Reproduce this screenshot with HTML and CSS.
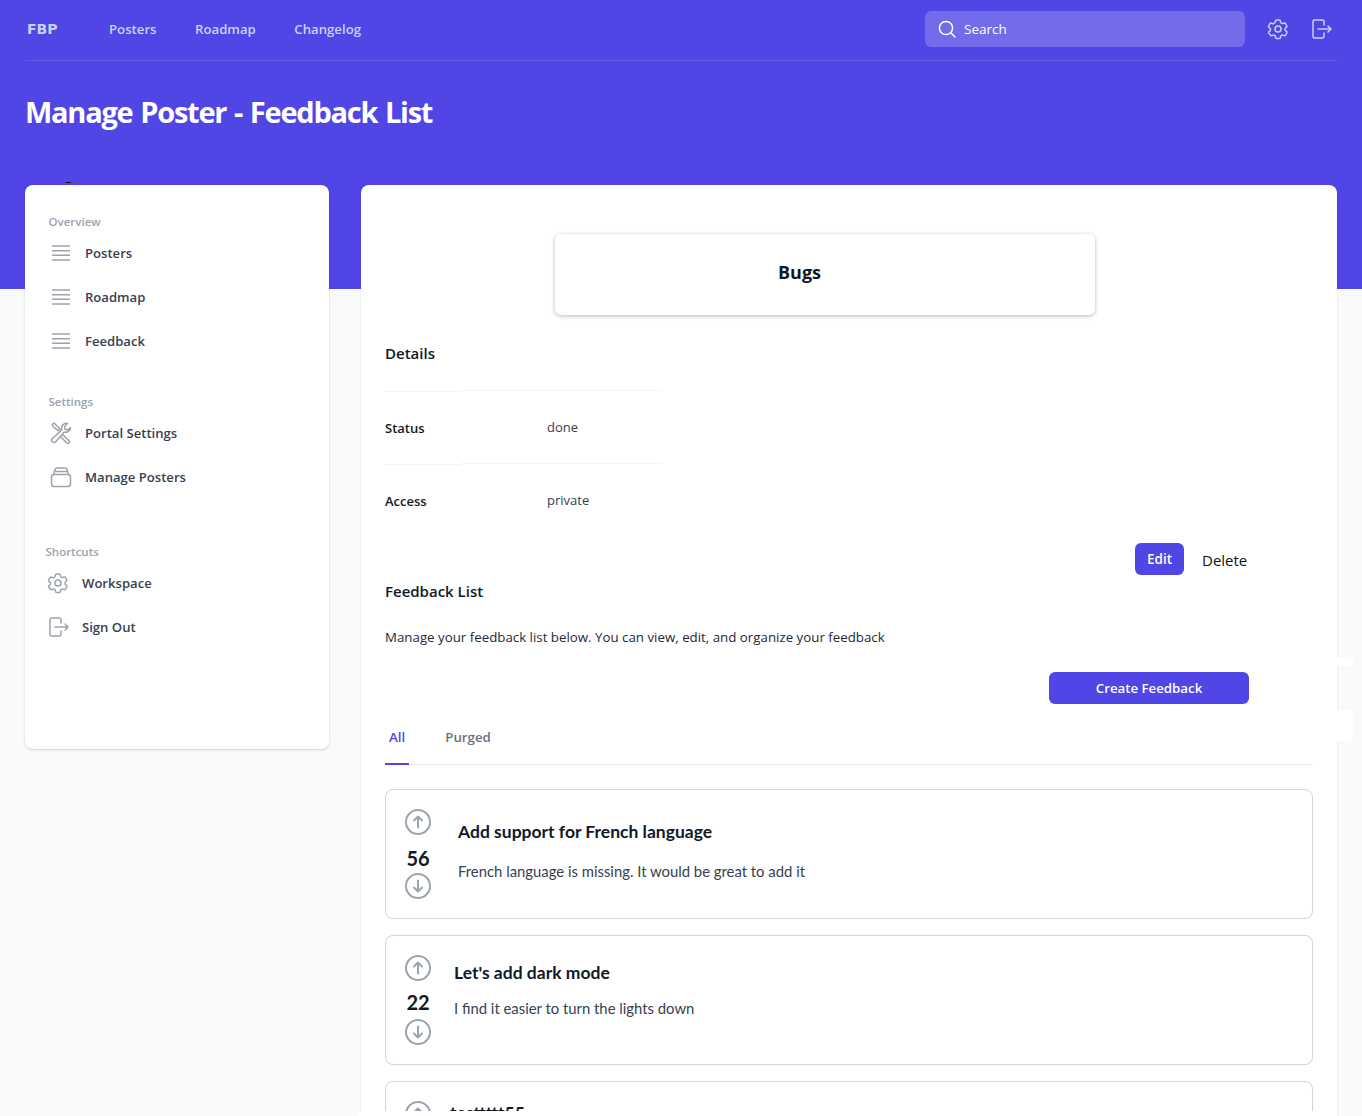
FILE: index.html
```html
<!DOCTYPE html>
<html lang="en">
<head>
<meta charset="utf-8">
<title>Manage Poster - Feedback List</title>
<link rel="stylesheet" href="styles.css">
</head>
<body>
<header class="band">
  <nav class="topnav">
    <span class="logo">FBP</span>
    <a class="navlink">Posters</a>
    <a class="navlink">Roadmap</a>
    <a class="navlink">Changelog</a>
    <div class="search">
      <svg class="search-icon" viewBox="0 0 20 20" fill="none" stroke="currentColor" stroke-width="1.5" stroke-linecap="round"><circle cx="9" cy="9" r="6.6"/><path d="M14 14l4 4"/></svg>
      <span>Search</span>
    </div>
    <svg class="top-icon gear-a" viewBox="0 0 24 24" fill="none" stroke="currentColor" stroke-width="1.5" stroke-linejoin="round"><path d="M9.600 3.900c.1-.5.500-.9 1.100-.9h2.600c.5 0 1 .4 1.100.9l.2 1.300c.1.400.3.700.7.900l.5.300c.3.200.700.200 1.100.100l1.200-.5c.5-.2 1.100 0 1.400.5l1.300 2.300c.3.500.1 1-.3 1.400l-1 .8c-.3.200-.5.600-.5 1v.6c0 .4.200.8.500 1l1 .8c.4.300.5.900.3 1.400l-1.300 2.300c-.3.500-.9.700-1.400.5l-1.200-.5c-.4-.1-.8-.1-1.100.1l-.5.300c-.4.200-.6.500-.7.900l-.2 1.300c-.1.500-.6.900-1.100.9h-2.600c-.6 0-1-.4-1.100-.9l-.2-1.300c-.1-.4-.3-.7-.7-.9l-.5-.3c-.3-.2-.7-.2-1.100-.1l-1.200.5c-.5.200-1.100 0-1.400-.5L2.700 16c-.3-.5-.1-1.100.3-1.400l1-.8c.3-.2.500-.6.500-1v-.6c0-.4-.2-.8-.5-1l-1-.8c-.4-.4-.6-.9-.3-1.400L4 6.700c.3-.5.900-.7 1.400-.5l1.200.5c.4.100.8.100 1.100-.1l.5-.3c.4-.2.600-.5.700-.9z"/><circle cx="12" cy="12" r="3"/></svg>
    <svg class="top-icon" viewBox="0 0 24 24" fill="none" stroke="currentColor" stroke-width="1.5" stroke-linecap="round" stroke-linejoin="round"><path d="M15 8V4.500C15 3.700 14.300 3 13.500 3h-8C4.700 3 4 3.700 4 4.500v15c0 .8.700 1.500 1.500 1.500h8c.8 0 1.500-.7 1.500-1.500V16"/><path d="M9 12h13M19 9l3 3-3 3"/></svg>
  </nav>
  <h1 class="page-title">Manage Poster - Feedback List</h1>
</header>

<div class="layout">
  <aside class="sidebar">
    <span class="tick"></span>
    <p class="side-head">Overview</p>
    <a class="side-item"><svg class="side-icon" viewBox="0 0 24 24" fill="none" stroke="currentColor" stroke-width="1.500"><path d="M3 5h18M3 9.700h18M3 14.300h18M3 19h18"/></svg>Posters</a>
    <a class="side-item"><svg class="side-icon" viewBox="0 0 24 24" fill="none" stroke="currentColor" stroke-width="1.500"><path d="M3 5h18M3 9.700h18M3 14.300h18M3 19h18"/></svg>Roadmap</a>
    <a class="side-item"><svg class="side-icon" viewBox="0 0 24 24" fill="none" stroke="currentColor" stroke-width="1.500"><path d="M3 5h18M3 9.700h18M3 14.300h18M3 19h18"/></svg>Feedback</a>
    <p class="side-head settings-head">Settings</p>
    <a class="side-item"><svg class="side-icon" viewBox="0 0 24 24" fill="none" stroke="currentColor" stroke-width="1.500" stroke-linejoin="round" stroke-linecap="round"><path d="M21.500 6.500a4.800 4.800 0 0 1-6.300 4.600L6.500 21a2.200 2.200 0 0 1-3.200-.2 2.200 2.200 0 0 1-.1-3.100l9.700-8.800A4.800 4.800 0 0 1 18.500 2.500L15.500 5.500l.5 2.800 2.700.6z"/><path d="M3 3.500 5 2l6 6-1.800 1.700-5-4zM14 14l6.500 6.300a1.800 1.800 0 0 1-2.800 1.700L12 16"/></svg>Portal Settings</a>
    <a class="side-item"><svg class="side-icon" viewBox="0 0 24 24" fill="none" stroke="currentColor" stroke-width="1.500" stroke-linejoin="round"><rect x="2.500" y="9.500" width="19" height="12" rx="2.500"/><path d="M4.500 9.500 6 4.500c.2-.7.800-1.500 1.800-1.500h8.400c1 0 1.600.8 1.800 1.500l1.500 5M5.500 6.500h13"/></svg>Manage Posters</a>
    <p class="side-head shortcuts-head">Shortcuts</p>
    <a class="side-item short"><svg class="side-icon" viewBox="0 0 24 24" fill="none" stroke="currentColor" stroke-width="1.500" stroke-linejoin="round"><path d="M9.600 3.900c.1-.5.500-.9 1.100-.9h2.600c.5 0 1 .4 1.100.9l.2 1.300c.1.400.3.700.7.900l.5.300c.3.200.700.200 1.100.100l1.200-.5c.5-.2 1.100 0 1.400.5l1.300 2.300c.3.500.1 1-.3 1.400l-1 .8c-.3.200-.5.600-.5 1v.6c0 .4.200.8.500 1l1 .8c.4.300.5.900.3 1.400l-1.300 2.300c-.3.500-.9.700-1.400.5l-1.200-.5c-.4-.1-.8-.1-1.100.1l-.5.300c-.4.200-.6.500-.7.900l-.2 1.300c-.1.500-.6.900-1.100.9h-2.600c-.6 0-1-.4-1.100-.9l-.2-1.300c-.1-.4-.3-.7-.7-.9l-.5-.3c-.3-.2-.7-.2-1.100-.1l-1.200.5c-.5.200-1.100 0-1.400-.5L2.700 16c-.3-.5-.1-1.100.3-1.400l1-.8c.3-.2.500-.6.500-1v-.6c0-.4-.2-.8-.5-1l-1-.8c-.4-.4-.6-.9-.3-1.400L4 6.700c.3-.5.900-.7 1.400-.5l1.200.5c.4.100.8.100 1.100-.1l.5-.3c.4-.2.600-.5.700-.9z"/><circle cx="12" cy="12" r="3"/></svg>Workspace</a>
    <a class="side-item short"><svg class="side-icon" viewBox="0 0 24 24" fill="none" stroke="currentColor" stroke-width="1.500" stroke-linecap="round" stroke-linejoin="round"><path d="M15 8V4.500C15 3.700 14.300 3 13.500 3h-8C4.700 3 4 3.700 4 4.500v15c0 .8.700 1.500 1.500 1.500h8c.8 0 1.500-.7 1.500-1.500V16"/><path d="M9 12h13M19 9l3 3-3 3"/></svg>Sign Out</a>
  </aside>

  <main class="panel">
    <span class="stray stray-a"></span>
    <span class="stray stray-b"></span>
    <span class="bottom-cover"></span>
    <div class="bugs-card"><h2 class="bugs-title">Bugs</h2></div>
    <h3 class="details-title">Details</h3>
    <div class="detail-row">
      <span class="detail-label">Status</span><span class="detail-value">done</span>
    </div>
    <div class="detail-row">
      <span class="detail-label">Access</span><span class="detail-value">private</span>
    </div>
    <div class="actions">
      <button class="btn-edit">Edit</button>
      <button class="btn-delete">Delete</button>
    </div>
    <h3 class="list-title">Feedback List</h3>
    <p class="list-intro">Manage your feedback list below. You can view, edit, and organize your feedback</p>
    <div class="create-row"><button class="btn-create">Create Feedback</button></div>
    <div class="tabs">
      <a class="tab tab-active">All</a>
      <a class="tab">Purged</a>
    </div>
    <article class="fb-card fb-first">
      <div class="votes">
        <svg class="vote" viewBox="0 0 26 26" fill="none" stroke="currentColor" stroke-width="2" stroke-linecap="round" stroke-linejoin="round"><circle cx="13" cy="13" r="12"/><path d="M13 18.500v-11M9 11.500l4-4 4 4"/></svg>
        <span class="count">56</span>
        <svg class="vote" viewBox="0 0 26 26" fill="none" stroke="currentColor" stroke-width="2" stroke-linecap="round" stroke-linejoin="round"><circle cx="13" cy="13" r="12"/><path d="M13 7.500v11M9 14.500l4 4 4-4"/></svg>
      </div>
      <div class="fb-body">
        <h4 class="fb-title">Add support for French language</h4>
        <p class="fb-text">French language is missing. It would be great to add it</p>
      </div>
    </article>
    <article class="fb-card fb-second">
      <div class="votes">
        <svg class="vote" viewBox="0 0 26 26" fill="none" stroke="currentColor" stroke-width="2" stroke-linecap="round" stroke-linejoin="round"><circle cx="13" cy="13" r="12"/><path d="M13 18.500v-11M9 11.500l4-4 4 4"/></svg>
        <span class="count">22</span>
        <svg class="vote" viewBox="0 0 26 26" fill="none" stroke="currentColor" stroke-width="2" stroke-linecap="round" stroke-linejoin="round"><circle cx="13" cy="13" r="12"/><path d="M13 7.500v11M9 14.500l4 4 4-4"/></svg>
      </div>
      <div class="fb-body">
        <h4 class="fb-title">Let's add dark mode</h4>
        <p class="fb-text">I find it easier to turn the lights down</p>
      </div>
    </article>
    <article class="fb-card fb-third">
      <div class="votes">
        <svg class="vote" viewBox="0 0 26 26" fill="none" stroke="currentColor" stroke-width="2" stroke-linecap="round" stroke-linejoin="round"><circle cx="13" cy="13" r="12"/><path d="M13 18.500v-11M9 11.500l4-4 4 4"/></svg>
      </div>
      <div class="fb-body">
        <h4 class="fb-title">testtttt55</h4>
      </div>
    </article>
  </main>
</div>
</body>
</html>
```
FILE: styles.css
```css
* { box-sizing: border-box; }
html, body { margin: 0; height: 1116px; overflow: hidden; }
body { background: #f9fafb; font-family: "Open Sans", "Noto Sans", sans-serif; color: #111827; }
h1, h2, h3, h4, p { margin: 0; }
button { font-family: inherit; border: 0; cursor: pointer; }

.band { background: #4f46e5; height: 289px; padding: 0 25px; }
.topnav { height: 61px; display: flex; align-items: center; border-bottom: 1px solid #6159e8; padding: 0 4px 2px 2px; }
.logo { font-family: "DejaVu Sans", sans-serif; font-weight: 700; font-size: 14px; color: #c7d2fe; width: 82px; }
.navlink { font-size: 13.2px; font-weight: 600; color: #c7d2fe; margin-right: 38.5px; line-height: 20px; }
.search { margin-left: auto; width: 320px; height: 36px; background: #726bea; border-radius: 6px; display: flex; align-items: center; padding-left: 12px; color: #fff; font-size: 13.5px; margin-right: 21px; }
.search-icon { width: 20px; height: 20px; margin-right: 7px; }
.top-icon { width: 24px; height: 24px; color: #c7d2fe; margin-left: 10px; }
.top-icon.gear-a { margin-left: 0; margin-right: 9px; }
.page-title { font-size: 29px; font-weight: 700; color: #fff; line-height: 36px; margin-top: 33px; letter-spacing: -1.25px; word-spacing: 1.5px; }

.layout { display: grid; grid-template-columns: 304px 976px; gap: 32px; padding: 0 25px; margin-top: -104px; align-items: start; }
.sidebar { position: relative; background: #fff; border-radius: 8px; height: 564px; padding: 30px 24px 0; box-shadow: 0 1px 3px rgba(0,0,0,.12), 0 1px 2px rgba(0,0,0,.06); }
.tick { position: absolute; left: 41px; top: -3px; width: 5px; height: 1px; background: #111; }
.side-head { font-size: 11.5px; line-height: 14px; color: #9ca3af; font-weight: 600; margin-left: -0.5px; }
.settings-head { margin-top: 32px; }
.shortcuts-head { margin-top: 46px; margin-left: -3.5px; }
.side-item { display: flex; align-items: center; height: 44px; font-size: 13.1px; font-weight: 600; color: #374151; }
.side-item.short { margin-left: -3px; }
.side-head + .side-item { margin-top: 2px; }
.side-icon { width: 24px; height: 24px; color: #9ca3af; margin-right: 12px; }

.panel { position: relative; background: #fff; border-radius: 8px; height: 1000px; padding: 49px 24px 0; box-shadow: 0 1px 3px rgba(0,0,0,.1); }
.stray { position: absolute; left: 976px; width: 16px; background: #fff; }
.stray-a { top: 472px; height: 9px; }
.stray-b { top: 525px; height: 31px; }
.bottom-cover { position: absolute; z-index: 2; left: -3px; right: 0; top: 926px; height: 10px; background: #fff; }
.bugs-card { width: 540px; height: 81px; margin-left: 170px; border-radius: 6px; box-shadow: 0 1px 4px rgba(0,0,0,.28); padding: 26px 0 0 223px; }
.bugs-title { font-size: 18px; line-height: 24px; font-weight: 700; color: #111827; }
.details-title { font-size: 15px; font-weight: 600; line-height: 20px; margin-top: 28px; }
.detail-row { width: 277px; height: 73px; padding-top: 2px; display: flex; align-items: center; font-size: 13px; background: linear-gradient(#f3f4f6, #f3f4f6) 0 1px / 76px 1px no-repeat, linear-gradient(#f3f4f6, #f3f4f6) 76px 0 / 201px 1px no-repeat; }
.details-title + .detail-row { margin-top: 27px; }
.detail-label { width: 162px; font-weight: 600; color: #111827; }
.detail-value { color: #374151; padding-bottom: 2px; }
.actions { display: flex; align-items: flex-start; margin-top: 7px; padding-left: 750px; height: 32px; }
.btn-edit { width: 49px; height: 32px; background: #4f46e5; color: #fff; border-radius: 6px; font-size: 13.5px; font-weight: 600; padding: 0; }
.btn-delete { background: none; color: #111; font-size: 15px; padding: 0; margin: 7px 0 0 18px; }
.list-title { font-size: 15px; font-weight: 600; line-height: 20px; margin-top: 6px; }
.list-intro { font-size: 13.3px; line-height: 20px; color: #1f2937; margin-top: 26px; }
.create-row { margin-top: 25px; padding-left: 664px; }
.btn-create { width: 200px; height: 32px; background: #4f46e5; color: #fff; border-radius: 6px; font-size: 13.25px; font-weight: 600; padding: 0; display: block; }
.tabs { display: flex; width: 928px; height: 61px; border-bottom: 1px solid #e5e7eb; }
.tab { font-size: 13.3px; font-weight: 600; color: #6b7280; height: 61px; padding: 23px 4px 0; line-height: 20px; margin-right: 32px; }
.tab-active { color: #4f46e5; border-bottom: 2px solid #4f46e5; }

.fb-card { width: 928px; height: 130px; border: 1px solid #d1d5db; border-radius: 8px; display: flex; font-family: Lato, sans-serif; margin-bottom: 16px; overflow: hidden; }
.fb-first { margin-top: 24px; }
.votes { width: 26px; margin-left: 19px; display: flex; flex-direction: column; align-items: center; padding-top: 19px; }
.vote { width: 26px; height: 26px; color: #9ca3af; flex: none; }
.count { font-size: 20px; font-weight: 700; line-height: 24px; margin-top: 11px; height: 27px; color: #111827; }
.fb-body { flex: 1; }
.fb-first .fb-body { padding: 31px 0 0 27px; }
.fb-second .fb-body { padding: 26px 0 0 23px; }
.fb-second .count { margin-top: 9px; height: 29px; }
.fb-third .fb-body { padding: 20px 0 0 19px; }
.fb-title { font-size: 17.5px; font-weight: 700; line-height: 22px; color: #111827; }
.fb-text { font-size: 14.85px; line-height: 20px; color: #374151; margin-top: 18px; }
.fb-second .fb-text { margin-top: 14px; }
```
